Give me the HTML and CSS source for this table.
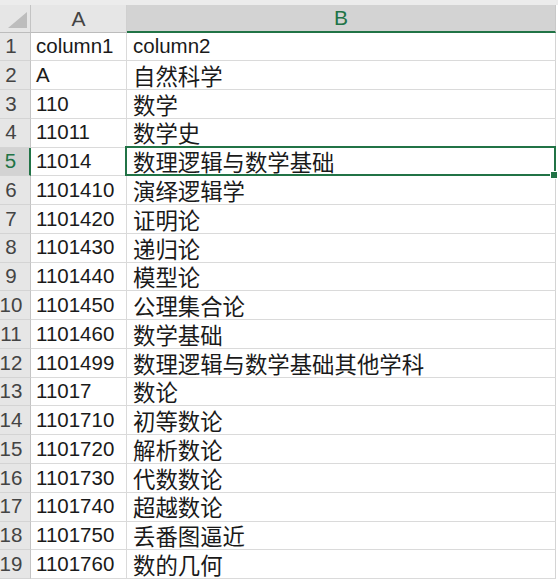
FILE: index.html
```html
<!DOCTYPE html>
<html lang="zh-CN">
<head>
<meta charset="utf-8">
<title>Sheet</title>
<link rel="stylesheet" href="styles.css">
</head>
<body>
<div class="topstrip"></div>
<div class="sheet">
  <div class="corner"><span class="tri"></span></div>
  <div class="colhead">A</div>
  <div class="colhead active">B</div>

  <div class="rowhead">1</div><div class="cell a">column1</div><div class="cell b">column2</div>
  <div class="rowhead">2</div><div class="cell a">A</div><div class="cell b zh">自然科学</div>
  <div class="rowhead">3</div><div class="cell a">110</div><div class="cell b zh">数学</div>
  <div class="rowhead">4</div><div class="cell a">11011</div><div class="cell b zh">数学史</div>
  <div class="rowhead active">5</div><div class="cell a">11014</div><div class="cell b zh sel">数理逻辑与数学基础<span class="handle"></span></div>
  <div class="rowhead">6</div><div class="cell a">1101410</div><div class="cell b zh">演绎逻辑学</div>
  <div class="rowhead">7</div><div class="cell a">1101420</div><div class="cell b zh">证明论</div>
  <div class="rowhead">8</div><div class="cell a">1101430</div><div class="cell b zh">递归论</div>
  <div class="rowhead">9</div><div class="cell a">1101440</div><div class="cell b zh">模型论</div>
  <div class="rowhead">10</div><div class="cell a">1101450</div><div class="cell b zh">公理集合论</div>
  <div class="rowhead">11</div><div class="cell a">1101460</div><div class="cell b zh">数学基础</div>
  <div class="rowhead">12</div><div class="cell a">1101499</div><div class="cell b zh">数理逻辑与数学基础其他学科</div>
  <div class="rowhead">13</div><div class="cell a">11017</div><div class="cell b zh">数论</div>
  <div class="rowhead">14</div><div class="cell a">1101710</div><div class="cell b zh">初等数论</div>
  <div class="rowhead">15</div><div class="cell a">1101720</div><div class="cell b zh">解析数论</div>
  <div class="rowhead">16</div><div class="cell a">1101730</div><div class="cell b zh">代数数论</div>
  <div class="rowhead">17</div><div class="cell a">1101740</div><div class="cell b zh">超越数论</div>
  <div class="rowhead">18</div><div class="cell a">1101750</div><div class="cell b zh">丢番图逼近</div>
  <div class="rowhead">19</div><div class="cell a">1101760</div><div class="cell b zh">数的几何</div>
</div>
</body>
</html>
```

FILE: styles.css
```css
html, body {
  margin: 0;
  padding: 0;
  background: #ffffff;
}
body {
  width: 558px;
  height: 584px;
  overflow: hidden;
  font-family: "Liberation Sans", "Noto Sans CJK SC", sans-serif;
  font-size: 20.5px;
  color: #1a1a1a;
}
.topstrip {
  height: 5px;
  background: #ececec;
}
.sheet {
  display: grid;
  grid-template-columns: 31px 96px 429px;
  grid-template-rows: 27.5px;
  grid-auto-rows: 28.78px;
}
.corner {
  background: #e6e6e6;
  border-right: 1px solid #c4c4c4;
  border-bottom: 1px solid #bcbcbc;
  position: relative;
}
.tri {
  position: absolute;
  left: 8px;
  top: 7px;
  width: 0;
  height: 0;
  border-left: 19px solid transparent;
  border-bottom: 16px solid #bdbdbd;
}
.colhead {
  background: #e6e6e6;
  border-right: 1px solid #d0d0d0;
  border-bottom: 1px solid #bcbcbc;
  display: flex;
  align-items: center;
  justify-content: center;
  color: #444444;
  font-size: 21px;
  line-height: 1;
}
.colhead.active {
  background: #d3d3d3;
  color: #217346;
  border-bottom: 2px solid #217346;
  border-right: 1px solid #c8c8c8;
}
.rowhead {
  background: #e6e6e6;
  border-right: 1px solid #c4c4c4;
  border-bottom: 1px solid #d4d4d4;
  display: flex;
  align-items: center;
  justify-content: center;
  padding-right: 8px;
  color: #444444;
  line-height: 1;
}
.rowhead.active {
  background: #d3d3d3;
  color: #217346;
  border-right: 2px solid #217346;
}
.cell {
  border-right: 1px solid #dadada;
  border-bottom: 1px solid #dadada;
  display: flex;
  align-items: center;
  white-space: nowrap;
  line-height: 1;
  overflow: visible;
}
.cell.a {
  padding-left: 5px;
}
.cell.b {
  padding-left: 6px;
  border-right-color: #d4d4d4;
}
.cell.zh {
  font-family: "Noto Sans CJK SC", sans-serif;
  font-size: 22.4px;
}
.sel {
  position: relative;
}
.sel::after {
  content: "";
  position: absolute;
  left: -2px;
  top: -2px;
  right: -1px;
  bottom: -1px;
  border: 2px solid #217346;
  pointer-events: none;
}
.handle {
  position: absolute;
  right: -3px;
  bottom: -4px;
  width: 6px;
  height: 6px;
  background: #217346;
  border: 1px solid #ffffff;
  z-index: 2;
}
```
